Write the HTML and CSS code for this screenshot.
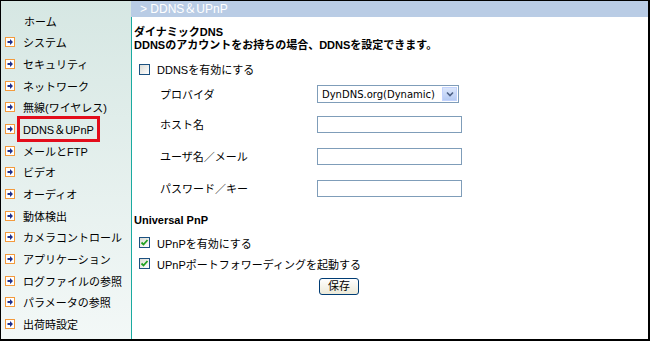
FILE: index.html
```html
<!DOCTYPE html>
<html lang="ja">
<head>
  <meta charset="UTF-8">
  <title>DDNS &amp; UPnP</title>
  <link rel="stylesheet" href="styles.css">
</head>
<body>
  <div class="frame">
    <!-- Left menu -->
    <ul class="menu">
      <li class="home">ホーム</li>
      <li><svg class="arrow" width="10" height="10" viewBox="0 0 10 10"><rect x="0.5" y="0.5" width="9" height="9" fill="#fff" stroke="#f39a3c"/><path d="M2.5 4h2.5v-2l3 3-3 3v-2h-2.5z" fill="#1f2e8c"/></svg>システム</li>
      <li><svg class="arrow" width="10" height="10" viewBox="0 0 10 10"><rect x="0.5" y="0.5" width="9" height="9" fill="#fff" stroke="#f39a3c"/><path d="M2.5 4h2.5v-2l3 3-3 3v-2h-2.5z" fill="#1f2e8c"/></svg>セキュリティ</li>
      <li><svg class="arrow" width="10" height="10" viewBox="0 0 10 10"><rect x="0.5" y="0.5" width="9" height="9" fill="#fff" stroke="#f39a3c"/><path d="M2.5 4h2.5v-2l3 3-3 3v-2h-2.5z" fill="#1f2e8c"/></svg>ネットワーク</li>
      <li><svg class="arrow" width="10" height="10" viewBox="0 0 10 10"><rect x="0.5" y="0.5" width="9" height="9" fill="#fff" stroke="#f39a3c"/><path d="M2.5 4h2.5v-2l3 3-3 3v-2h-2.5z" fill="#1f2e8c"/></svg>無線(ワイヤレス)</li>
      <li><svg class="arrow" width="10" height="10" viewBox="0 0 10 10"><rect x="0.5" y="0.5" width="9" height="9" fill="#fff" stroke="#f39a3c"/><path d="M2.5 4h2.5v-2l3 3-3 3v-2h-2.5z" fill="#1f2e8c"/></svg><span class="current">DDNS＆UPnP</span></li>
      <li><svg class="arrow" width="10" height="10" viewBox="0 0 10 10"><rect x="0.5" y="0.5" width="9" height="9" fill="#fff" stroke="#f39a3c"/><path d="M2.5 4h2.5v-2l3 3-3 3v-2h-2.5z" fill="#1f2e8c"/></svg>メールとFTP</li>
      <li><svg class="arrow" width="10" height="10" viewBox="0 0 10 10"><rect x="0.5" y="0.5" width="9" height="9" fill="#fff" stroke="#f39a3c"/><path d="M2.5 4h2.5v-2l3 3-3 3v-2h-2.5z" fill="#1f2e8c"/></svg>ビデオ</li>
      <li><svg class="arrow" width="10" height="10" viewBox="0 0 10 10"><rect x="0.5" y="0.5" width="9" height="9" fill="#fff" stroke="#f39a3c"/><path d="M2.5 4h2.5v-2l3 3-3 3v-2h-2.5z" fill="#1f2e8c"/></svg>オーディオ</li>
      <li><svg class="arrow" width="10" height="10" viewBox="0 0 10 10"><rect x="0.5" y="0.5" width="9" height="9" fill="#fff" stroke="#f39a3c"/><path d="M2.5 4h2.5v-2l3 3-3 3v-2h-2.5z" fill="#1f2e8c"/></svg>動体検出</li>
      <li><svg class="arrow" width="10" height="10" viewBox="0 0 10 10"><rect x="0.5" y="0.5" width="9" height="9" fill="#fff" stroke="#f39a3c"/><path d="M2.5 4h2.5v-2l3 3-3 3v-2h-2.5z" fill="#1f2e8c"/></svg>カメラコントロール</li>
      <li><svg class="arrow" width="10" height="10" viewBox="0 0 10 10"><rect x="0.5" y="0.5" width="9" height="9" fill="#fff" stroke="#f39a3c"/><path d="M2.5 4h2.5v-2l3 3-3 3v-2h-2.5z" fill="#1f2e8c"/></svg>アプリケーション</li>
      <li><svg class="arrow" width="10" height="10" viewBox="0 0 10 10"><rect x="0.5" y="0.5" width="9" height="9" fill="#fff" stroke="#f39a3c"/><path d="M2.5 4h2.5v-2l3 3-3 3v-2h-2.5z" fill="#1f2e8c"/></svg>ログファイルの参照</li>
      <li><svg class="arrow" width="10" height="10" viewBox="0 0 10 10"><rect x="0.5" y="0.5" width="9" height="9" fill="#fff" stroke="#f39a3c"/><path d="M2.5 4h2.5v-2l3 3-3 3v-2h-2.5z" fill="#1f2e8c"/></svg>パラメータの参照</li>
      <li><svg class="arrow" width="10" height="10" viewBox="0 0 10 10"><rect x="0.5" y="0.5" width="9" height="9" fill="#fff" stroke="#f39a3c"/><path d="M2.5 4h2.5v-2l3 3-3 3v-2h-2.5z" fill="#1f2e8c"/></svg>出荷時設定</li>
    </ul>

    <!-- Main panel -->
    <div class="main">
      <div class="title-bar">&gt; DDNS＆UPnP</div>
      <div class="content">
        <div class="heading">ダイナミックDNS<br>DDNSのアカウントをお持ちの場合、DDNSを設定できます。</div>

        <div class="check-row first"><span class="box"></span>DDNSを有効にする</div>

        <div class="field first">
          <span class="label">プロバイダ</span>
          <div class="select">
            <span class="select-text">DynDNS.org(Dynamic)</span>
            <span class="select-btn">
              <svg width="8" height="6" viewBox="0 0 8 6"><path d="M1 1.5 L4 4.5 L7 1.5" fill="none" stroke="#4d6185" stroke-width="1.6"/></svg>
            </span>
          </div>
        </div>
        <div class="field">
          <span class="label">ホスト名</span>
          <span class="text-input"></span>
        </div>
        <div class="field">
          <span class="label">ユーザ名／メール</span>
          <span class="text-input"></span>
        </div>
        <div class="field">
          <span class="label">パスワード／キー</span>
          <span class="text-input"></span>
        </div>

        <div class="heading upnp">Universal PnP</div>

        <div class="check-row second"><span class="box checked"><svg width="9" height="9" viewBox="0 0 9 9"><path d="M1.5 4.5 L3.5 6.5 L7.5 2" fill="none" stroke="#21a121" stroke-width="1.8"/></svg></span>UPnPを有効にする</div>
        <div class="check-row"><span class="box checked"><svg width="9" height="9" viewBox="0 0 9 9"><path d="M1.5 4.5 L3.5 6.5 L7.5 2" fill="none" stroke="#21a121" stroke-width="1.8"/></svg></span>UPnPポートフォワーディングを起動する</div>

        <div class="actions"><span class="button">保存</span></div>
      </div>
    </div>
  </div>
</body>
</html>
```

FILE: styles.css
```css
html, body {
  margin: 0;
  padding: 0;
  background-color: #fff;
}

body {
  font-family: "Liberation Sans", "Noto Sans CJK JP", sans-serif;
  font-size: 11px;
  color: #000;
}

.frame {
  width: 650px;
  height: 341px;
  box-sizing: border-box;
  border-top: 1px solid #000;
  border-left: 1px solid #000;
  border-right: 2px solid #000;
  border-bottom: 2px solid #000;
  display: flex;
  overflow: hidden;
}

/* Left menu */
.menu {
  list-style: none;
  margin: 0;
  padding: 9px 0 0 0;
  width: 130px;
  flex: none;
  background: linear-gradient(#d6e7e3, #f3f8f7);
}

.menu li {
  height: 21.65px;
  display: flex;
  align-items: center;
  padding-left: 4px;
  white-space: nowrap;
}

.menu li.home {
  padding-left: 23px;
}

.arrow {
  flex: none;
  margin-right: 8px;
}

.current {
  outline: 3px solid #e30d1b;
  outline-offset: 2px;
  padding: 0 1px;
  margin-left: -1px;
}

/* Main panel */
.main {
  flex: 1;
  display: flex;
  flex-direction: column;
}

.title-bar {
  height: 16px;
  line-height: 16px;
  background-color: #b9cce5;
  color: #fff;
  font-size: 12px;
  padding-left: 9px;
}

.content {
  flex: 1;
  border-left: 1px solid #1aaaa0;
  padding-left: 2px;
}

.heading {
  font-weight: bold;
  line-height: 13px;
  margin-top: 9px;
}

.heading.upnp {
  margin-top: 10px;
}

.check-row {
  display: flex;
  align-items: center;
  height: 21px;
  padding-left: 5px;
}

.check-row.first {
  margin-top: 6px;
  height: 22px;
}

.check-row.second {
  margin-top: 5px;
}

.box {
  width: 11px;
  height: 11px;
  box-sizing: border-box;
  border: 1px solid #1c5180;
  background: linear-gradient(135deg, #dcdcd6, #fff);
  margin-right: 7px;
  display: flex;
  align-items: center;
  justify-content: center;
}

.field {
  display: flex;
  align-items: center;
  height: 32px;
  padding-left: 26px;
}

.field.first {
  height: 28px;
}

.label {
  width: 157px;
  flex: none;
}

.text-input {
  width: 145px;
  height: 17px;
  box-sizing: border-box;
  border: 1px solid #7f9db9;
  background-color: #fff;
}

.select {
  width: 142px;
  height: 18px;
  box-sizing: border-box;
  border: 1px solid #7f9db9;
  display: flex;
  align-items: center;
  padding: 1px;
}

.select-text {
  flex: 1;
  padding-left: 3px;
  font-family: "DejaVu Sans", sans-serif;
  font-size: 10px;
  white-space: nowrap;
  overflow: hidden;
}

.select-btn {
  width: 15px;
  height: 14px;
  background: linear-gradient(#dbe6fb, #b6cbf4);
  border: 1px solid #c3d3fd;
  box-sizing: border-box;
  display: flex;
  align-items: center;
  justify-content: center;
}

.actions {
  padding-left: 185px;
  margin-top: 4px;
}

.button {
  display: inline-block;
  width: 40px;
  height: 17px;
  line-height: 15px;
  box-sizing: border-box;
  border: 1px solid #003c74;
  border-radius: 3px;
  background: linear-gradient(#fff, #ece9d8);
  text-align: center;
  font-size: 11px;
}
```
